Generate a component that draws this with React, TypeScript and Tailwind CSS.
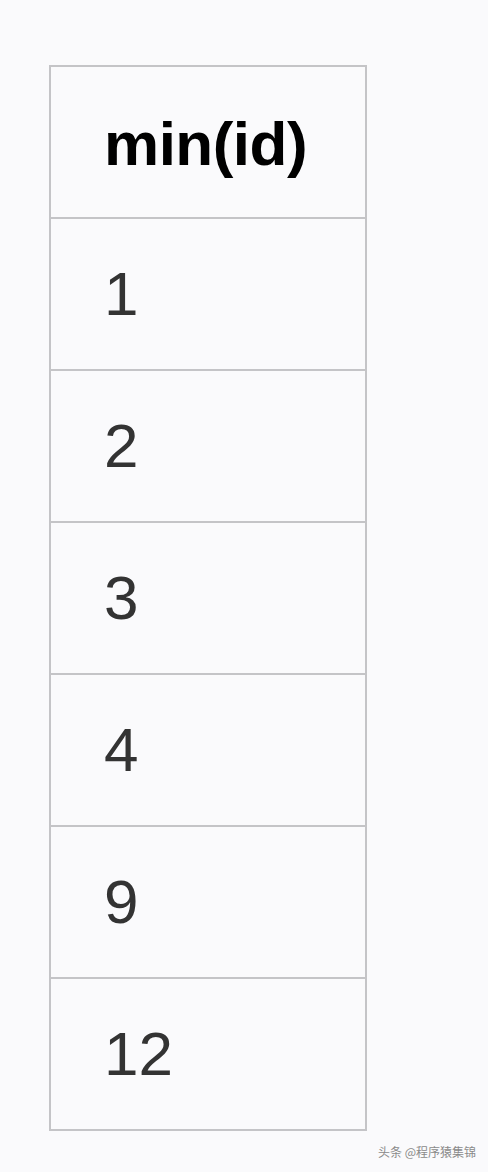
import React from "react";

const rows = ["1", "2", "3", "4", "9", "12"];

const App: React.FC = () => {
  return (
    <div
      className="w-[488px] h-[1172px] overflow-hidden bg-[#fafafc] flex flex-col"
      style={{ fontFamily: '"Liberation Sans", Arial, sans-serif' }}
    >
      {/* cut-off line of text from the previous screen */}
      <div className="h-[65px] overflow-hidden">
        <div className="flex -mt-[25px] text-[24px] leading-none text-black">
          <span className="w-[72px]" />
          <span className="w-[25px]">g</span>
          <span className="w-[40px]">g</span>
          <span className="w-[40px]">g</span>
          <span className="w-[87px]">,</span>
          <span>g</span>
        </div>
      </div>

      {/* result table */}
      <div className="ml-[49px] w-[318px] border-2 border-[#c4c4c7] flex flex-col">
        <div className="h-[152px] border-b-2 border-[#c4c4c7] flex items-center pl-[53px] pt-[4px]">
          <span className="text-[62px] font-bold tracking-[-0.5px] text-black leading-none">
            min(id)
          </span>
        </div>
        {rows.map((v, i) => (
          <div
            key={v}
            className={
              i < rows.length - 1
                ? "h-[152px] border-b-2 border-[#c4c4c7] flex items-center pl-[53px]"
                : "h-[150px] flex items-center pl-[53px]"
            }
          >
            <span className="text-[62px] text-[#333333] leading-none">{v}</span>
          </div>
        ))}
      </div>

      {/* watermark */}
      <div className="flex justify-end pr-[12px] mt-[12px]">
        <span
          className="text-[12px] text-[#8a8a8a]"
          style={{ fontFamily: '"Noto Sans CJK SC", sans-serif' }}
        >
          头条 @程序猿集锦
        </span>
      </div>
    </div>
  );
};

export default App;
